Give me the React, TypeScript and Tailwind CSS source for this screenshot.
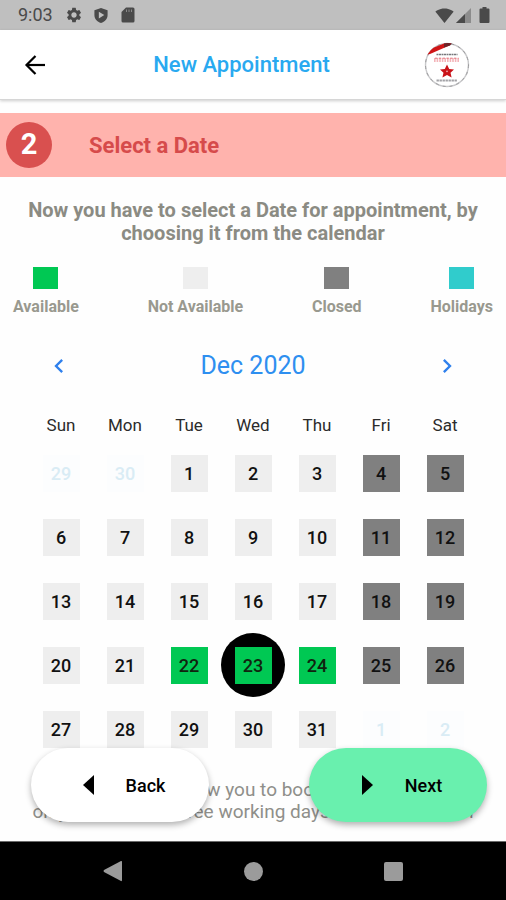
import { useState } from 'react'
import { MdChevronLeft, MdChevronRight, MdSettings, MdSignalWifi4Bar } from 'react-icons/md'

type DayStatus = 'available' | 'unavailable' | 'closed' | 'outside'

type Day = { key: string; label: number; status: DayStatus }

const WEEKDAYS = ['Sun', 'Mon', 'Tue', 'Wed', 'Thu', 'Fri', 'Sat']

const LEGEND = [
  { label: 'Available', color: 'bg-[#00c853]' },
  { label: 'Not Available', color: 'bg-[#eeeeee]' },
  { label: 'Closed', color: 'bg-[#808080]' },
  { label: 'Holidays', color: 'bg-[#30cccc]' },
]

const DAY_STYLES: Record<DayStatus, string> = {
  available: 'bg-[#00c853] text-[#10240f]',
  unavailable: 'bg-[#eeeeee] text-[#111111]',
  closed: 'bg-[#808080] text-[#111111]',
  outside: 'bg-[#fcfdfe] text-[#d9ecf5]',
}

const AVAILABLE = [22, 23, 24]

// December 2020 starts on a Tuesday
const WEEKS: Day[][] = Array.from({ length: 5 }, (_, w) =>
  WEEKDAYS.map((_, d) => {
    const n = w * 7 + d - 1
    if (n < 1) return { key: `nov-${n + 30}`, label: n + 30, status: 'outside' }
    if (n > 31) return { key: `jan-${n - 31}`, label: n - 31, status: 'outside' }
    if (d > 4) return { key: `dec-${n}`, label: n, status: 'closed' }
    return { key: `dec-${n}`, label: n, status: AVAILABLE.includes(n) ? 'available' : 'unavailable' }
  })
)

function StatusBar() {
  return (
    <div className="flex h-[30px] shrink-0 items-center justify-between bg-[#bfbfbf] pr-4 pl-[18px] text-[#4a4a4a]">
      <div className="flex items-center">
        <span className="mr-3 text-[18px] leading-5">9:03</span>
        <MdSettings size={18} className="mr-2.5" />
        <svg width="16" height="17" viewBox="0 0 17 17" className="mr-3">
          <path fill="currentColor" fillRule="evenodd" d="M8.5 0.5 L15.5 3 V8 C15.5 12 12.6 15.3 8.5 16.5 C4.4 15.3 1.5 12 1.5 8 V3 Z M6.2 4.4 V11.6 L12 8 Z" />
        </svg>
        <svg width="14" height="16" viewBox="0 0 14 16">
          <path fill="currentColor" d="M5 0.5 H12 Q13.5 0.5 13.5 2 V14 Q13.5 15.5 12 15.5 H2 Q0.5 15.5 0.5 14 V5 Z" />
          <path stroke="#8a8a8a" strokeWidth="1" d="M5.5 2.5 V5 M8 2.5 V5 M10.5 2.5 V5" />
        </svg>
      </div>
      <div className="flex items-center">
        <MdSignalWifi4Bar size={19} className="mr-0.5" />
        <svg width="15" height="15" viewBox="0 0 15 15" className="mr-2">
          <path fill="#8c8c8c" d="M15 0 V15 H0 Z" />
          <path fill="currentColor" d="M9 6 V15 H0 Z" />
        </svg>
        <svg width="11" height="16" viewBox="0 0 11 16">
          <path fill="currentColor" d="M3.5 0 H7.5 V1.5 H9.5 Q10.5 1.5 10.5 2.5 V15 Q10.5 16 9.5 16 H1.5 Q0.5 16 0.5 15 V2.5 Q0.5 1.5 1.5 1.5 H3.5 Z" />
        </svg>
      </div>
    </div>
  )
}

function Logo() {
  return (
    <svg width="46" height="46" viewBox="0 0 46 46" role="img" aria-label="Logo">
      <circle cx="23" cy="23" r="21.5" fill="#ffffff" stroke="#c9c9cb" strokeWidth="1.4" />
      <circle cx="23" cy="23" r="21.5" fill="none" stroke="#9c9c9e" strokeWidth="1" strokeDasharray="3 4" />
      <path d="M3.5 12.5 Q6 8 10 5.6 L20 1.6 L27 1 L26 3.2 L6 12 Z" fill="#d01517" />
      <path d="M20 1.6 Q24 0.4 28 1.6 L26 3.4 L20 5.6 Z" fill="#6b2429" />
      <path d="M12.5 12.5 H33.5" stroke="#77777b" strokeWidth="1.5" strokeDasharray="2 0.5" />
      <path d="M10 18 H35.5" stroke="#f3b4b9" strokeWidth="4" strokeDasharray="1.6 1" />
      <path d="M11 16.2 H34.5" stroke="#e2747d" strokeWidth="1" strokeDasharray="2.4 1.4" />
      <path d="M23 22.4 L25.2 27 L30 27.6 L26.5 30.8 L27.6 35.4 L23 33 L18.4 35.4 L19.5 30.8 L16 27.6 L20.8 27 Z" fill="#c91318" />
      <circle cx="23" cy="29.4" r="0.8" fill="#f0b9bc" />
      <path d="M12.5 38.5 H33.5" stroke="#a2a2a6" strokeWidth="1.8" strokeDasharray="2.4 0.6" />
    </svg>
  )
}

function Header() {
  return (
    <header className="z-10 flex h-[70px] shrink-0 items-center justify-between border-b border-[#d6d6d6] bg-white pr-9 pl-[23px] shadow-[0_1px_3px_rgba(0,0,0,0.2)]">
      <button type="button" aria-label="Go back" className="flex w-9 items-center">
        <svg width="24" height="24" viewBox="0 0 24 24" fill="none" stroke="#000000" strokeWidth="2.2">
          <path d="M22 12 H4" />
          <path d="M12.5 3 L3.5 12 L12.5 21" />
        </svg>
      </button>
      <h1 className="text-[22px] font-medium text-[#29a9f0]">New Appointment</h1>
      <Logo />
    </header>
  )
}

function Calendar() {
  const [selected, setSelected] = useState('dec-23')

  return (
    <section className="mt-[19px] px-[29px]">
      <div className="flex h-[60px] items-center justify-between px-4">
        <button type="button" aria-label="Previous month" className="text-[#2f80ed]">
          <MdChevronLeft size={28} />
        </button>
        <h2 className="text-[25px] text-[#2e8ff0]">Dec 2020</h2>
        <button type="button" aria-label="Next month" className="text-[#2f80ed]">
          <MdChevronRight size={28} />
        </button>
      </div>
      <table className="mt-[15px] w-full table-fixed">
        <thead>
          <tr className="h-[30px]">
            {WEEKDAYS.map(name => (
              <th key={name} scope="col" className="p-0 text-[17px] font-normal text-[#2b2b2b]">{name}</th>
            ))}
          </tr>
        </thead>
        <tbody>
          {WEEKS.map(week => (
            <tr key={week[0].key} className="h-16">
              {week.map(day => (
                <td key={day.key} className="p-0">
                  <button
                    type="button"
                    disabled={day.status !== 'available'}
                    onClick={() => setSelected(day.key)}
                    className={`mx-auto flex size-16 items-center justify-center rounded-full ${day.key === selected ? 'bg-black' : ''}`}
                  >
                    <span className={`flex size-[37px] items-center justify-center text-[18px] font-medium ${DAY_STYLES[day.status]}`}>
                      {day.label}
                    </span>
                  </button>
                </td>
              ))}
            </tr>
          ))}
        </tbody>
      </table>
    </section>
  )
}

export default function App() {
  return (
    <div className="flex min-h-screen flex-col bg-[#fefefe] font-['Roboto',sans-serif]">
      <StatusBar />
      <Header />

      <main className="relative flex grow flex-col">
        <div className="mt-[13px] flex h-16 items-center bg-[#ffb3ad] pl-1.5">
          <span className="flex size-[46px] items-center justify-center rounded-full bg-[#d9504f] text-[29px] font-bold text-white">2</span>
          <h2 className="ml-[37px] text-[22px] font-bold text-[#d64b4b]">Select a Date</h2>
        </div>

        <p className="mt-[22px] px-4 text-center text-[20px] leading-[23px] font-bold text-[#8b8b83]">
          Now you have to select a Date for appointment, by choosing it from the calendar
        </p>

        <ul className="mt-[22px] flex justify-between px-[13px]">
          {LEGEND.map(item => (
            <li key={item.label} className="flex flex-col items-center">
              <span className={`h-[22px] w-[25px] ${item.color}`} />
              <span className="mt-2 text-[16px] leading-5 font-bold text-[#99998f]">{item.label}</span>
            </li>
          ))}
        </ul>

        <Calendar />

        <p className="mt-[18px] px-5 pb-[18px] text-center text-[19px] leading-[22px] text-[#8f8f8a]">
          We only allow you to book your slot
          <br />
          only on the next three working days from that day on
        </p>

        {/* floating actions */}
        <div className="absolute inset-x-0 bottom-[19px] flex justify-between pr-[19px] pl-[31px]">
          <button type="button" className="flex h-[74px] w-[178px] items-center justify-center gap-8 rounded-full bg-white pl-2 text-[18px] font-medium text-black shadow-[0_3px_6px_rgba(0,0,0,0.3)]">
            <svg width="11" height="20" viewBox="0 0 11 20">
              <path d="M11 0 V20 L0 10 Z" />
            </svg>
            Back
          </button>
          <button type="button" className="flex h-[74px] w-[178px] items-center justify-center gap-8 rounded-full bg-[#69f0ae] pl-2 text-[18px] font-medium text-black shadow-[0_3px_6px_rgba(0,0,0,0.3)]">
            <svg width="11" height="20" viewBox="0 0 11 20">
              <path d="M0 0 V20 L11 10 Z" />
            </svg>
            Next
          </button>
        </div>
      </main>

      <nav className="flex h-[59px] shrink-0 items-center justify-center gap-[121px] border-t border-[#6b6b6b] bg-black text-[#9b9b9b]">
        <button type="button" aria-label="Back">
          <svg width="20" height="22" viewBox="0 0 20 22" fill="currentColor">
            <path d="M18 1 Q19 0.5 19 2 V20 Q19 21.5 18 21 L1 12 Q0 11 1 10 Z" />
          </svg>
        </button>
        <button type="button" aria-label="Home" className="size-[19px] rounded-full bg-[#9b9b9b]" />
        <button type="button" aria-label="Recent apps" className="size-[19px] rounded-xs bg-[#9b9b9b]" />
      </nav>
    </div>
  )
}
